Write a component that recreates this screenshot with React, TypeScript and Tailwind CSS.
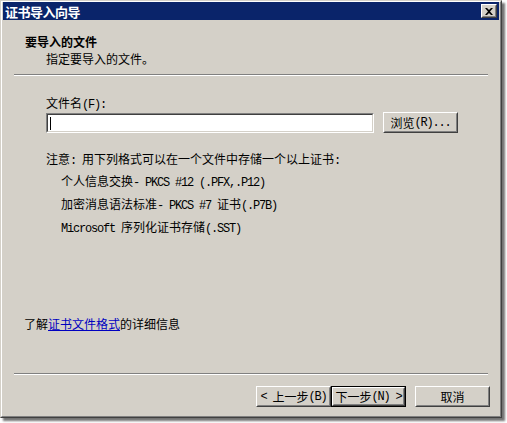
import React from 'react';

const font = { fontFamily: '"Noto Sans CJK SC", "Liberation Sans", sans-serif' };

// half-width latin, like SimSun's fixed-width latin glyphs
function L({ children }: { children: React.ReactNode }) {
  return <span className="font-['Liberation_Mono',monospace] text-[12px] leading-[14px] tracking-[-1.2px]">{children}</span>;
}

function Btn({ children, className = '', focused = false }: { children: React.ReactNode; className?: string; focused?: boolean }) {
  return (
    <div className={`${focused ? 'border border-black' : ''} ${className}`}>
      <div className="h-full border border-t-white border-l-white border-r-[#404040] border-b-[#404040] bg-[#d4d0c8]">
        <div className="h-full flex items-center justify-center border border-transparent border-r-[#808080] border-b-[#808080] text-[12px] leading-[14px] text-black whitespace-pre">
          {children}
        </div>
      </div>
    </div>
  );
}

function Separator({ className = '' }: { className?: string }) {
  return <div className={`h-[2px] border-t border-t-[#808080] border-b border-b-white ${className}`} />;
}

export default function App() {
  return (
    <div className="w-[507px] h-[423px] bg-white" style={font}>
      <div className="w-[502px] h-[418px] bg-[#d4d0c8] border border-t-[#d4d0c8] border-l-[#d4d0c8] border-r-[#404040] border-b-[#404040] shadow-[3px_3px_2px_rgba(0,0,0,0.55)]">
        <div className="h-full border border-t-white border-l-white border-r-[#808080] border-b-[#808080] px-[1px] flex flex-col">
          {/* title bar */}
          <div className="h-[18px] bg-[#0a246a] flex items-center justify-between pl-[2px] pr-[2px]">
            <span className="text-white font-bold text-[13px] leading-none tracking-[-0.5px]">证书导入向导</span>
            <Btn className="w-[16px] h-[14px]">
              <svg width="8" height="7" viewBox="0 0 8 7">
                <path d="M0 0h2l2 2 2-2h2L5 3.5 8 7H6L4 5 2 7H0l3-3.5z" fill="#000" />
              </svg>
            </Btn>
          </div>

          {/* header */}
          <div className="pl-[22px] pt-[15px] h-[54px]">
            <div className="text-[12px] font-bold leading-[14px] text-black">要导入的文件</div>
            <div className="pl-[21px] mt-[3px] text-[12px] leading-[14px] text-black">指定要导入的文件。</div>
          </div>
          <Separator className="mx-[11px]" />

          {/* content */}
          <div className="pl-[43px] pr-[30px] pt-[20px] flex-1 flex flex-col text-[12px] leading-[14px] text-black">
            <div className="h-[14px]">文件名<L>(F):</L></div>
            <div className="flex items-center mt-[3px] gap-[9px]">
              <div className="w-[328px] h-[20px] border border-t-[#808080] border-l-[#808080] border-r-white border-b-white">
                <div className="h-full border border-t-[#404040] border-l-[#404040] border-r-[#d4d0c8] border-b-[#d4d0c8] bg-white flex items-center pl-[2px]">
                  <div className="w-[1px] h-[13px] bg-black" />
                </div>
              </div>
              <Btn className="w-[75px] h-[21px] -mt-[1px]">浏览<L>(R)...</L></Btn>
            </div>
            <div className="h-[14px] mt-[19px]">注意<L>: </L>用下列格式可以在一个文件中存储一个以上证书<L>:</L></div>
            <div className="pl-[15px] flex flex-col gap-[9px] mt-[8px]">
              <div className="h-[14px]">个人信息交换<L>- PKCS #12 (.PFX,.P12)</L></div>
              <div className="h-[14px]">加密消息语法标准<L>- PKCS #7 </L>证书<L>(.P7B)</L></div>
              <div className="h-[14px]"><L>Microsoft </L>序列化证书存储<L>(.SST)</L></div>
            </div>
            <div className="mt-auto mb-[42px] -ml-[22px]">
              了解<span className="text-[#0000c0] underline">证书文件格式</span>的详细信息
            </div>
          </div>

          <Separator className="mx-[11px]" />
          <div className="flex justify-end items-center pr-[9px] pt-[11px] pb-[9px]">
            <Btn className="w-[75px] h-[21px]"><L>&lt; </L>上一步<L>(B)</L></Btn>
            <Btn focused className="w-[75px] h-[21px]">下一步<L>(N) &gt;</L></Btn>
            <Btn className="w-[75px] h-[21px] ml-[9px]">取消</Btn>
          </div>
        </div>
      </div>
    </div>
  );
}
